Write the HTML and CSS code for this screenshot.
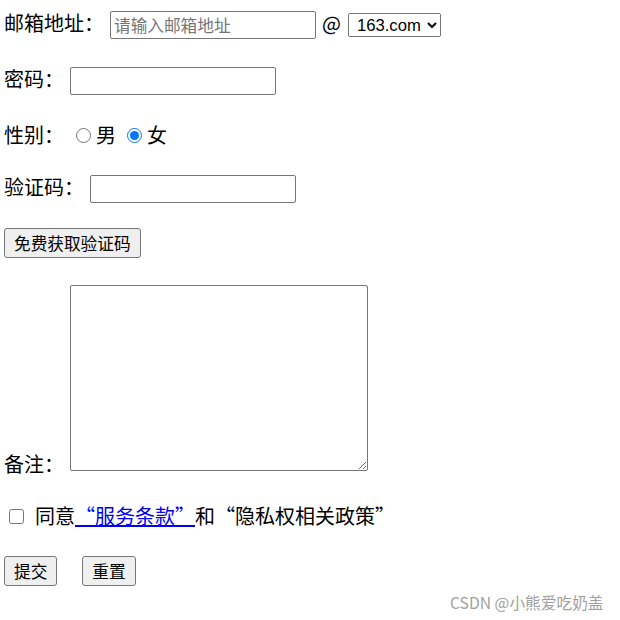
FILE: index.html
```html
<!DOCTYPE html>
<html lang="zh-CN">
<head>
    <meta charset="UTF-8">
    <meta name="viewport" content="width=device-width, initial-scale=1.0">
    <title>注册</title>
    <link rel="stylesheet" href="styles.css">
</head>
<body>
    <form class="reg-form" id="regForm">
        <div class="row row-email">
            <label class="lbl" for="email">邮箱地址：</label>
            <input type="text" class="field" id="email" name="email" placeholder="请输入邮箱地址">
            <span class="at">@</span>
            <select class="domain" name="domain">
                <option>163.com</option>
                <option>126.com</option>
                <option>qq.com</option>
            </select>
        </div>

        <div class="row">
            <label class="lbl" for="pwd">密码：</label>
            <input type="password" class="field" id="pwd" name="pwd">
        </div>

        <div class="row row-radio">
            <span class="lbl-plain">性别：</span>
            <input type="radio" class="radio" name="sex" id="male">
            <label for="male">男</label>
            <input type="radio" class="radio radio-second" name="sex" id="female" checked>
            <label for="female">女</label>
        </div>

        <div class="row row-code">
            <label class="lbl" for="code">验证码：</label>
            <input type="text" class="field" id="code" name="code">
        </div>

        <div class="row row-btn">
            <button type="button" class="btn">免费获取验证码</button>
        </div>

        <div class="row row-note">
            <label class="lbl-note" for="note">备注：</label>
            <textarea class="note" id="note" name="note"></textarea>
        </div>

        <div class="row row-agree">
            <input type="checkbox" class="check" id="agree">
            <span class="agree-text">同意<a href="#">“服务条款”</a>和“隐私权相关政策”</span>
        </div>

        <div class="row row-actions">
            <input type="submit" class="btn" value="提交">
            <input type="reset" class="btn" value="重置">
        </div>
    </form>

    <div class="watermark">CSDN @小熊爱吃奶盖</div>
</body>
</html>
```

FILE: styles.css
```css
body {
    margin: 0;
    font-family: "Noto Sans CJK SC", sans-serif;
    font-size: 20px;
    color: #000;
    background: #fff;
    position: relative;
    height: 620px;
}
.reg-form {
    padding: 10px 0 0 4px;
}
.row {
    display: flex;
    align-items: center;
    gap: 6px;
    height: 30px;
    margin-bottom: 26px;
}
.lbl {
    line-height: 28px;
    padding-bottom: 5px;
}
.lbl-plain,
.row-radio label {
    line-height: 26px;
}
.field {
    width: 206px;
    height: 28px;
    box-sizing: border-box;
    margin: 0;
    padding: 0 3px;
    border: 1px solid #767676;
    border-radius: 2px;
    font-family: "Noto Sans CJK SC", sans-serif;
    font-size: 16.67px;
}
.field::placeholder {
    color: #757575;
}
.at {
    line-height: 28px;
    padding-bottom: 5px;
}
.domain {
    width: 93px;
    height: 24px;
    margin: 0 0 0 1px;
    padding-left: 4px;
    font-family: "Liberation Sans", Arial, sans-serif;
    font-size: 16.67px;
}
.row-radio {
    height: 26px;
    gap: 0;
}
.radio {
    width: 15px;
    height: 15px;
    margin: 0 5px 0 12px;
}
.radio-second {
    margin-left: 11px;
}
.row-code {
    margin-bottom: 24px;
}
.row-btn {
    height: 30px;
    margin-bottom: 27px;
}
.btn {
    height: 30px;
    margin: 0;
    padding: 0 9px;
    border: 1px solid #767676;
    border-radius: 3px;
    background-color: #efefef;
    font-family: "Noto Sans CJK SC", sans-serif;
    font-size: 16.67px;
    color: #000;
}
.row-note {
    height: auto;
    align-items: flex-end;
    margin-bottom: 24px;
}
.lbl-note {
    line-height: 28px;
}
.note {
    width: 298px;
    height: 186px;
    box-sizing: border-box;
    margin: 0 0 7px 0;
    border: 1px solid #767676;
    border-radius: 2px;
    font-family: "Noto Sans CJK SC", sans-serif;
}
.row-agree {
    height: 28px;
    gap: 0;
}
.check {
    width: 15px;
    height: 15px;
    margin: 0 11px 0 5px;
}
.agree-text {
    line-height: 28px;
}
.agree-text a {
    color: #0000ee;
}
.row-actions {
    gap: 25px;
    margin-bottom: 0;
}
.watermark {
    position: absolute;
    left: 450px;
    top: 591px;
    font-size: 15.7px;
    color: #a0a0a0;
}
```
